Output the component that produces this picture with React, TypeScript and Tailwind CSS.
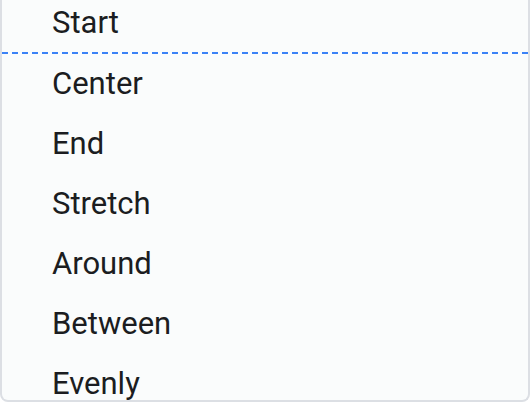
const items = ["Start", "Center", "End", "Stretch", "Around", "Between", "Evenly"];

export default function App() {
  return (
    <div className="h-[402px] w-[530px] overflow-hidden bg-white font-['Roboto',sans-serif]">
      <div className="h-[402px] overflow-hidden rounded-b-lg border-x-2 border-b-2 border-[#dcdfe4] bg-[#fafcfc]">
        <ul className="-mt-[6px]">
          {items.map((item, i) => (
            <li
              key={item}
              className={`flex h-[60px] items-center pl-[50px] text-[31px] text-[#1b1d21] ${
                i === 0 ? "border-b-2 border-dashed border-[#3b82f6]" : ""
              }`}
            >
              {item}
            </li>
          ))}
        </ul>
      </div>
    </div>
  );
}
